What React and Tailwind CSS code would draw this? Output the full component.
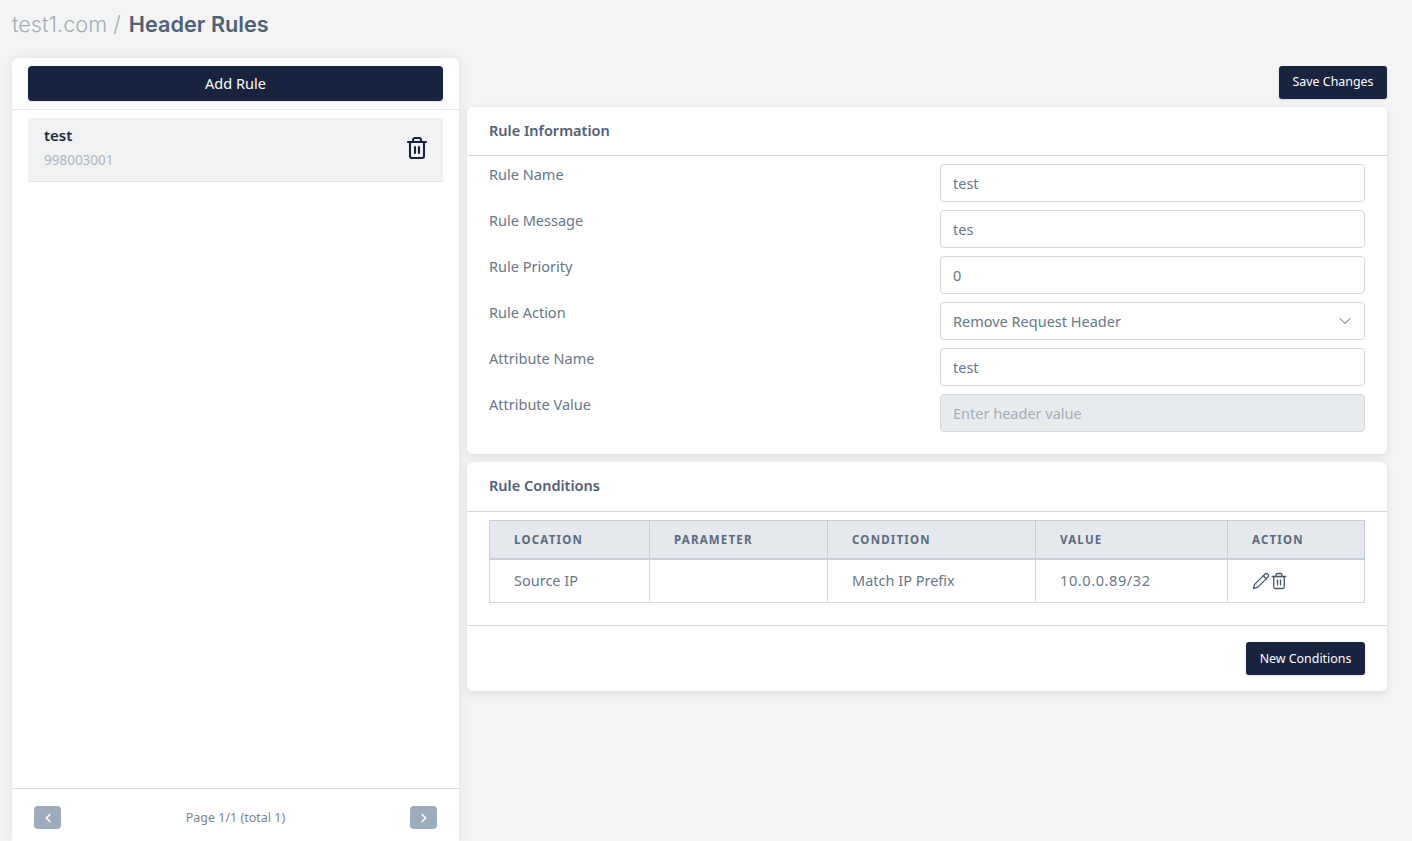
import { ChevronDown, ChevronLeft, ChevronRight, Pencil, Trash2 } from "lucide-react";

const fields = [
  { label: "Rule Name", value: "test" },
  { label: "Rule Message", value: "tes" },
  { label: "Rule Priority", value: "0" },
  { label: "Rule Action", value: "Remove Request Header", select: true },
  { label: "Attribute Name", value: "test" },
  { label: "Attribute Value", placeholder: "Enter header value", disabled: true },
];

const columns = [
  { name: "LOCATION", width: "w-[160px]" },
  { name: "PARAMETER", width: "w-[178px]" },
  { name: "CONDITION", width: "w-[208px]" },
  { name: "VALUE", width: "w-[192px]" },
  { name: "ACTION", width: "" },
];

function Field({ field }) {
  return (
    <div className="flex h-[46px] justify-between">
      <label className="text-[14.5px] leading-[20px] text-[#68778a]">{field.label}</label>
      <div className="relative h-[38px] w-[425px]">
        {field.select ? (
          <>
            <div className="flex h-full items-center rounded border border-[#d3d7de] bg-white px-3 pt-[1px] text-[14.5px] text-[#68778a]">
              {field.value}
            </div>
            <ChevronDown className="absolute right-[10px] top-[9px] h-[20px] w-[20px] text-[#9aa5b1]" strokeWidth={1.4} />
          </>
        ) : (
          <input
            readOnly
            disabled={field.disabled}
            value={field.value || ""}
            placeholder={field.placeholder}
            className={`h-full w-full rounded border border-[#d3d7de] px-3 text-[14.5px] text-[#68778a] outline-none placeholder:text-[#a5adb8] ${
              field.disabled ? "bg-[#e8ebee]" : "bg-white"
            }`}
          />
        )}
      </div>
    </div>
  );
}

export default function App() {
  return (
    <div className="flex h-[841px] flex-col overflow-hidden bg-[#f3f5f5] pl-3 pr-[25px] font-['Noto_Sans','Liberation_Sans',sans-serif]">
      <h1 className="flex h-[58px] items-start pt-[9px] font-['Inter',sans-serif] text-[21.7px] font-light leading-[30px] text-[#a3abb8]">
        test1.com /&nbsp;<span className="ml-[2px] font-semibold text-[#4f6079]">Header Rules</span>
      </h1>

      <div className="flex min-h-0 flex-1 gap-2">
        <aside className="flex w-[447px] shrink-0 flex-col rounded-t-md bg-white shadow-[0_0_12px_rgba(0,0,0,0.08)]">
          <div className="border-b border-[#e2e5ea] px-4 py-2">
            <button className="h-[35px] w-full rounded bg-[#18233f] text-[14.5px] text-white shadow">Add Rule</button>
          </div>
          <div className="flex-1 px-4 pt-2">
            <div className="flex h-[64px] justify-between border-b border-[#e2e5ea] bg-[#f1f2f4] pl-4 pr-[14px] pt-[7px]">
              <div>
                <div className="text-[15px] font-semibold leading-[20px] text-[#1f2a40]">test</div>
                <div className="mt-[6px] text-[13.5px] leading-[18px] text-[#aeb5bf]">998003001</div>
              </div>
              <Trash2 className="mb-[11px] h-[24px] w-[24px] self-center text-[#18233f]" strokeWidth={2.1} />
            </div>
          </div>
          <div className="flex h-[53px] items-start justify-between border-t border-[#dcdfe6] px-[22px] pt-[17px]">
            <button className="flex h-[23px] w-[27px] items-center justify-center rounded-sm bg-[#9dacbc] text-white">
              <ChevronLeft className="h-[14px] w-[14px]" strokeWidth={3} />
            </button>
            <span className="text-[12.5px] leading-[23px] text-[#7b8794]">Page 1/1 (total 1)</span>
            <button className="flex h-[23px] w-[27px] items-center justify-center rounded-sm bg-[#9dacbc] text-white">
              <ChevronRight className="h-[14px] w-[14px]" strokeWidth={3} />
            </button>
          </div>
        </aside>

        <main className="min-w-0 flex-1">
          <div className="flex h-[49px] items-start justify-end pt-2">
            <button className="h-[33px] w-[108px] rounded-[3px] bg-[#18233f] text-[12.4px] text-white shadow">Save Changes</button>
          </div>

          <section className="h-[347px] rounded-md bg-white shadow-[0_3px_10px_rgba(0,0,0,0.09)]">
            <h2 className="flex h-[49px] items-center border-b border-[#d5d9de] px-[22px] text-[14.5px] font-semibold text-[#4f6079]">
              Rule Information
            </h2>
            <div className="px-[22px] pt-2">
              {fields.map((field) => (
                <Field key={field.label} field={field} />
              ))}
            </div>
          </section>

          <section className="mt-2 h-[229px] rounded-md bg-white shadow-[0_3px_10px_rgba(0,0,0,0.09)]">
            <h2 className="flex h-[50px] items-center border-b border-[#d5d9de] px-[22px] pb-[2px] text-[14.5px] font-semibold text-[#4f6079]">
              Rule Conditions
            </h2>
            <div className="border-b border-[#d5d9de] px-[22px] pb-[22px] pt-2">
              <table className="w-full table-fixed border-collapse text-[14.5px] text-[#68778a]">
                <thead>
                  <tr className="h-[38px] bg-[#e5e8ec]">
                    {columns.map((col) => (
                      <th
                        key={col.name}
                        className={`border border-b-2 border-[#c8ced6] pl-6 text-left text-[11.5px] font-bold tracking-[1.2px] text-[#5a6b80] ${col.width}`}
                      >
                        {col.name}
                      </th>
                    ))}
                  </tr>
                </thead>
                <tbody>
                  <tr className="h-[44px]">
                    <td className="border border-[#d3d7de] pl-6">Source IP</td>
                    <td className="border border-[#d3d7de] pl-6"></td>
                    <td className="border border-[#d3d7de] pl-6">Match IP Prefix</td>
                    <td className="border border-[#d3d7de] pl-6 tracking-[0.6px]">10.0.0.89/32</td>
                    <td className="border border-[#d3d7de] pl-6">
                      <div className="flex items-center text-[#44546a]">
                        <Pencil className="h-[18px] w-[18px]" strokeWidth={1.75} />
                        <Trash2 className="h-[18px] w-[18px]" strokeWidth={1.75} />
                      </div>
                    </td>
                  </tr>
                </tbody>
              </table>
            </div>
            <div className="flex justify-end px-[22px] pt-4">
              <button className="h-[33px] w-[119px] rounded-[3px] bg-[#18233f] pt-[1px] text-[12.4px] text-white shadow">New Conditions</button>
            </div>
          </section>
        </main>
      </div>
    </div>
  );
}
